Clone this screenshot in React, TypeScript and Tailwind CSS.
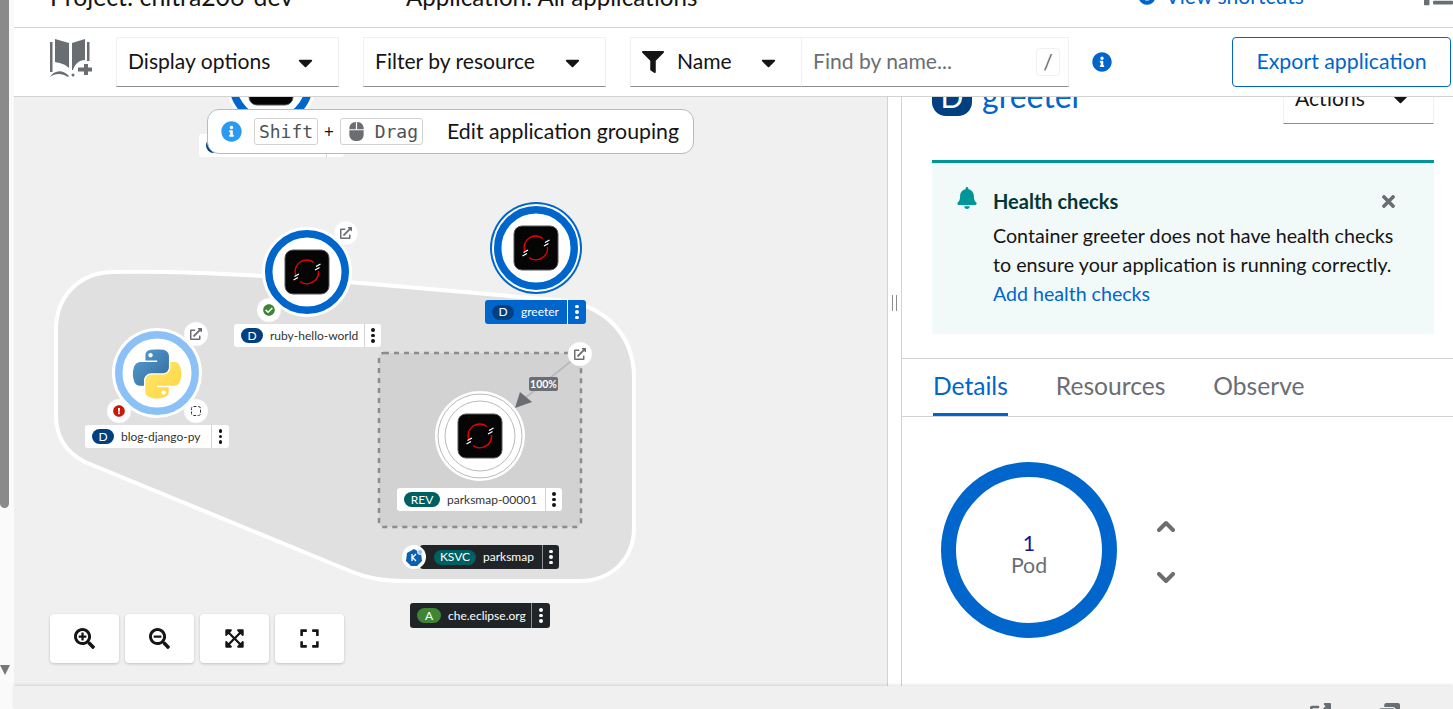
import type { ReactNode } from "react";
import {
  FaBell,
  FaCaretDown,
  FaCheckCircle,
  FaExclamationCircle,
  FaExpand,
  FaExpandArrowsAlt,
  FaExternalLinkAlt,
  FaFilter,
  FaInfoCircle,
  FaList,
  FaMouse,
  FaSearchMinus,
  FaSearchPlus,
  FaTimes,
  FaWindowRestore,
} from "react-icons/fa";

function OpenshiftIcon({ cx, cy }: { cx: number; cy: number }) {
  return (
    <g transform={`translate(${cx} ${cy})`}>
      <rect x="-22" y="-22" width="44" height="44" rx="8" fill="#050505" stroke="#55585c" strokeWidth="1" />
      <path d="M-11.500 3A11.700 11.700 0 0 1 7 -9.500" fill="none" stroke="#e00" strokeWidth="1.400" />
      <path d="M11.500 -1A11.700 11.700 0 0 1 -7 9.500" fill="none" stroke="#e00" strokeWidth="1.400" />
      <path d="M8 -2L12.500 -4.500M9 -5.500L13.500 -8M-12.500 4.500L-8 2M-13.500 8L-9 5.500" stroke="#fff" strokeWidth="1.400" />
    </g>
  );
}

function Decorator({ cx, cy }: { cx: number; cy: number }) {
  return <circle cx={cx} cy={cy} r="12" fill="#fff" stroke="#ececec" strokeWidth="0.5" />;
}

function LinkDecorator({ cx, cy }: { cx: number; cy: number }) {
  return (
    <g>
      <Decorator cx={cx} cy={cy} />
      <FaExternalLinkAlt x={cx - 6} y={cy - 6} size={12} color="#6a6e73" />
    </g>
  );
}

function NodeRing({ cx, cy, color }: { cx: number; cy: number; color: string }) {
  return (
    <g>
      <circle cx={cx} cy={cy} r="45" fill="#fff" />
      <circle cx={cx} cy={cy} r="38.250" fill="#fff" stroke={color} strokeWidth="7.500" />
    </g>
  );
}

function Topology() {
  return (
    <svg viewBox="14 97 873 589" className="absolute left-0 top-0 w-[873px] h-[589px]">
      <defs>
        <linearGradient id="pyBlue" x1="0" y1="0" x2="1" y2="1">
          <stop offset="0" stopColor="#5a9fd4" />
          <stop offset="1" stopColor="#306998" />
        </linearGradient>
        <linearGradient id="pyYellow" x1="0" y1="0" x2="1" y2="1">
          <stop offset="0" stopColor="#ffe873" />
          <stop offset="1" stopColor="#ffd43b" />
        </linearGradient>
      </defs>

      <path
        d="M112 272C200 270 300 278 360 283L555 300C605 303 634 335 634 378L634 527C634 560 611 581 579 581L405 581C385 581 370 579 350 571L85 462C65 452 56 435 56 415L56 330C56 295 80 273 112 272Z"
        fill="#e0e0e0"
        stroke="#fff"
        strokeWidth="4"
      />

      <NodeRing cx={271} cy={83} color="#0066cc" />
      <OpenshiftIcon cx={271} cy={83} />

      <NodeRing cx={307} cy={272} color="#0066cc" />
      <OpenshiftIcon cx={307} cy={272} />
      <LinkDecorator cx={346} cy={233} />
      <Decorator cx={269} cy={310} />
      <FaCheckCircle x={263} y={304} size={12} color="#3e8635" />

      <NodeRing cx={157} cy={373} color="#8bc1f7" />
      <g transform="translate(133 349) scale(0.435)">
        <path
          fill="url(#pyBlue)"
          d="M54.9 0.9C50.3 0.9 46 1.3 42.1 2 30.7 4 28.6 8.2 28.6 16v10.3h27v3.4H18.5c-7.8 0-14.7 4.7-16.9 13.7-2.5 10.3-2.6 16.7 0 27.4 1.9 8 6.5 13.7 14.3 13.7h9.3V72.2c0-8.9 7.7-16.7 16.9-16.7h27c7.5 0 13.5-6.2 13.5-13.7V16c0-7.3-6.2-12.8-13.5-14-4.7-.8-9.5-1.1-14.2-1.1zM40.3 9.2c2.8 0 5.1 2.3 5.1 5.1 0 2.8-2.3 5.1-5.1 5.1-2.8 0-5.1-2.3-5.1-5.1 0-2.8 2.3-5.1 5.1-5.1z"
        />
        <path
          fill="url(#pyYellow)"
          d="M85.6 29.7v12c0 9.3-7.9 17.1-16.9 17.1h-27c-7.4 0-13.5 6.3-13.5 13.7v25.7c0 7.3 6.4 11.6 13.5 13.7 8.5 2.5 16.7 3 27 0 6.8-2 13.5-5.9 13.5-13.7V88H55.2v-3.4h40.5c7.8 0 10.8-5.5 13.5-13.7 2.8-8.5 2.7-16.6 0-27.4-1.9-7.8-5.6-13.7-13.5-13.7H85.6zM70.4 94.8c2.8 0 5.1 2.3 5.1 5.1 0 2.8-2.3 5.1-5.1 5.1-2.8 0-5.1-2.3-5.1-5.1 0-2.8 2.3-5.1 5.1-5.1z"
        />
      </g>
      <LinkDecorator cx={196} cy={334} />
      <Decorator cx={119} cy={411} />
      <FaExclamationCircle x={113} y={405} size={12} color="#c9190b" />
      <Decorator cx={196} cy={411} />
      <rect x="191.5" y="406.5" width="9" height="9" rx="2" fill="none" stroke="#333" strokeWidth="1" strokeDasharray="3 1.5" />

      <circle cx="536" cy="248" r="46" fill="#0066cc" />
      <circle cx="536" cy="248" r="44" fill="#fff" />
      <circle cx="536" cy="248" r="38.250" fill="#fff" stroke="#0066cc" strokeWidth="7.500" />
      <OpenshiftIcon cx={536} cy={248} />

      <rect x="379" y="353" width="202" height="174" rx="5" fill="#d2d2d2" stroke="#8a8d90" strokeWidth="2.5" strokeDasharray="5 5" />
      <circle cx="480" cy="436" r="45" fill="#fff" />
      <circle cx="480" cy="436" r="42" fill="none" stroke="#b8bbbe" strokeWidth="1" />
      <circle cx="480" cy="436" r="35" fill="none" stroke="#b8bbbe" strokeWidth="1" />
      <OpenshiftIcon cx={480} cy={436} />
      <line x1="580" y1="354" x2="525" y2="398" stroke="#b8bbbe" strokeWidth="2" />
      <path d="M515 408L520 392L532 402Z" fill="#6a6e73" />
      <LinkDecorator cx={580} cy={354} />
    </svg>
  );
}

const pill = "flex items-center justify-center rounded-full text-white h-[15px] text-[12px] leading-none";

function NodeLabel({
  className,
  badge,
  badgeClass,
  name,
  nameClass,
  dividerClass,
  dotClass,
  menuClass,
}: {
  className: string;
  badge: string;
  badgeClass: string;
  name: string;
  nameClass: string;
  dividerClass: string;
  dotClass: string;
  menuClass: string;
}) {
  return (
    <div className={`absolute flex items-center rounded-[3px] text-[12px] leading-[18px] ${className}`}>
      <span className={`${pill} ${badgeClass}`}>{badge}</span>
      <span className={`flex-1 pl-[7px] whitespace-nowrap ${nameClass}`}>{name}</span>
      <span className={`flex h-full flex-col items-center justify-center gap-[2px] border-l ${menuClass} ${dividerClass}`}>
        <i className={`block h-[3.5px] w-[3.5px] rounded-full ${dotClass}`} />
        <i className={`block h-[3.5px] w-[3.5px] rounded-full ${dotClass}`} />
        <i className={`block h-[3.5px] w-[3.5px] rounded-full ${dotClass}`} />
      </span>
    </div>
  );
}

function ZoomButton({ children }: { children: ReactNode }) {
  return (
    <button className="flex h-[49px] w-[69px] items-center justify-center rounded-[4px] bg-white text-[#151515] shadow-[0_1px_3px_rgba(0,0,0,0.2)]">
      {children}
    </button>
  );
}

function Dropdown({ label, className }: { label: string; className: string }) {
  return (
    <div className={`flex h-[50px] items-center justify-between border border-[#f0f0f0] border-b-[#8a8d90] pl-[11px] pr-[21px] text-[#151515] ${className}`}>
      <span className="pb-[2px]">{label}</span>
      <FaCaretDown size={23} />
    </div>
  );
}

export default function App() {
  return (
    <div className="flex h-[709px] w-[1453px] overflow-hidden bg-white font-['Lato',sans-serif] text-[21.1px] leading-[32px] text-[#151515]">
      {/* browser scrollbar */}
      <div className="relative w-[14px] shrink-0 bg-[#fafafa]">
        <div className="h-[508px] w-[9px] rounded-b-[5px] bg-[#8a8a8a]" />
        <div className="absolute left-0 top-[665px] h-0 w-0 border-x-[5px] border-t-[10px] border-x-transparent border-t-[#777]" />
      </div>

      <div className="flex min-w-0 flex-1 flex-col">
        {/* project bar, mostly scrolled away */}
        <div className="flex h-[28px] shrink-0 items-start overflow-hidden border-b border-[#d2d2d2] pl-[36px]">
          <div className="-mt-[22px] w-[356px] shrink-0 text-[24.8px] leading-[37px]">Project: chitra206-dev</div>
          <div className="-mt-[22px] text-[24.1px] leading-[37px]">Application: All applications</div>
          <div className="-mt-[20px] ml-auto flex items-center gap-[10px] pr-[149px] text-[#0066cc]">
            <FaInfoCircle size={18} />
            <span>View shortcuts</span>
          </div>
          <FaList className="absolute left-[1424px] -top-[21px] text-[#6a6e73]" size={29} />
        </div>

        {/* toolbar */}
        <div className="flex h-[69px] shrink-0 items-center border-b border-[#d2d2d2] pl-[36px]">
          <svg viewBox="50 38 42 40" className="mb-[8px] h-[40px] w-[42px] shrink-0" fill="#6a6e73">
            <path d="M50 42H52.500V72H50Z" />
            <path d="M55 39L69 43V68C65 64 60 63 55 62Z" />
            <path d="M72 43L85 39V60C78 60 74 66 73 70H72Z" />
            <path d="M87 42H89.500V61H87Z" />
            <path d="M50 77C54 70 63 69 69 76L68 77C62 73 55 73 50 77Z" />
            <circle cx="73" cy="75" r="1.500" />
            <path d="M84 64H88V67.500H92V71.500H88V75H84V71.500H78V67.500H84Z" />
          </svg>
          <Dropdown label="Display options" className="ml-[24px] w-[223px]" />
          <Dropdown label="Filter by resource" className="ml-[24px] w-[243px]" />
          <div className="ml-[24px] flex h-[50px] w-[172px] items-center border border-[#f0f0f0] border-b-[#8a8d90] pl-[11px] pr-[21px]">
            <FaFilter size={22} />
            <span className="ml-[13px] flex-1 pb-[2px]">Name</span>
            <FaCaretDown size={23} />
          </div>
          <div className="flex h-[50px] w-[267px] items-center justify-between border border-l-0 border-[#f0f0f0] border-b-[#8a8d90] pl-[11px] pr-[8px] text-[#6a6e73]">
            <span className="pb-[2px]">Find by name...</span>
            <span className="flex h-[28px] w-[24px] items-center justify-center rounded-[4px] border border-[#f0f0f0]">/</span>
          </div>
          <FaInfoCircle className="ml-[23px] text-[#0066cc]" size={20} />
          <button className="ml-auto mr-[2px] h-[50px] w-[219px] rounded-[4px] border border-[#0066cc] pb-[2px] text-[21.3px] text-[#0066cc]">
            Export application
          </button>
        </div>

        {/* canvas and details */}
        <div className="flex min-h-0 flex-1">
          <div className="relative w-[874px] shrink-0 overflow-hidden border-r border-[#d2d2d2] bg-[#f0f0f0]">
            <Topology />
            <NodeLabel
              className="left-[185px] top-[37px] h-[23px] w-[145px] bg-white pl-[7px]"
              badge="D"
              badgeClass="w-[22px] bg-[#004080]"
              name=""
              nameClass=""
              dividerClass="border-[#d2d2d2]"
              dotClass="bg-[#151515]"
              menuClass="w-[18px]"
            />
            <NodeLabel
              className="left-[220px] top-[227px] h-[23px] w-[147px] bg-white pl-[7px]"
              badge="D"
              badgeClass="w-[22px] bg-[#004080]"
              name="ruby-hello-world"
              nameClass="text-[#333]"
              dividerClass="border-[#d2d2d2]"
              dotClass="bg-[#151515]"
              menuClass="w-[17px]"
            />
            <NodeLabel
              className="left-[71px] top-[328px] h-[23px] w-[144px] bg-white pl-[7px]"
              badge="D"
              badgeClass="w-[22px] bg-[#004080]"
              name="blog-django-py"
              nameClass="text-[#333]"
              dividerClass="border-[#d2d2d2]"
              dotClass="bg-[#151515]"
              menuClass="w-[18px]"
            />
            <NodeLabel
              className="left-[471px] top-[203px] h-[24px] w-[101px] bg-[#0066cc] pl-[7px]"
              badge="D"
              badgeClass="w-[22px] bg-[#004080]"
              name="greeter"
              nameClass="text-white"
              dividerClass="border-white"
              dotClass="bg-white"
              menuClass="w-[19px]"
            />
            <NodeLabel
              className="left-[383px] top-[391px] h-[23px] w-[165px] bg-white pl-[7px]"
              badge="REV"
              badgeClass="w-[36px] bg-[#005f60]"
              name="parksmap-00001"
              nameClass="text-[#333]"
              dividerClass="border-[#d2d2d2]"
              dotClass="bg-[#151515]"
              menuClass="w-[17px]"
            />
            <NodeLabel
              className="left-[406px] top-[448px] h-[24px] w-[139px] bg-[#212427] pl-[14px]"
              badge="KSVC"
              badgeClass="w-[42px] bg-[#005f60]"
              name="parksmap"
              nameClass="text-white"
              dividerClass="border-[#8a8d90]"
              dotClass="bg-white"
              menuClass="w-[17px]"
            />
            <NodeLabel
              className="left-[396px] top-[506px] h-[25px] w-[140px] bg-[#212427] pl-[7px]"
              badge="A"
              badgeClass="w-[24px] bg-[#3e8635]"
              name="che.eclipse.org"
              nameClass="text-white"
              dividerClass="border-[#8a8d90]"
              dotClass="bg-white"
              menuClass="w-[19px]"
            />

            {/* traffic weight on the revision edge */}
            <div className="absolute left-[515px] top-[280px] flex h-[14px] w-[29px] items-center justify-center rounded-[2px] bg-[#6a6e73] text-[10.5px] font-bold leading-none text-white">
              100%
            </div>

            {/* knative decorator sits on top of the service label */}
            <svg viewBox="0 0 24 24" className="absolute left-[388px] top-[448px] h-[24px] w-[24px]">
              <circle cx="12" cy="12" r="12" fill="#fff" />
              <path d="M12 4L19 8L20 16L15 21H9L4 16L5 8Z" fill="#0a5fb0" />
              <circle cx="18" cy="7" r="2.500" fill="#8bc1f7" stroke="#fff" strokeWidth="0.8" />
              <path d="M10 9V16M14 9L10.500 12.500L14 16" fill="none" stroke="#fff" strokeWidth="1.300" />
            </svg>

            {/* shortcut hint */}
            <div className="absolute left-[193px] top-[12px] flex h-[45px] w-[487px] items-center rounded-[12px] border border-[#b8bbbe] bg-white pl-[13px]">
              <FaInfoCircle className="text-[#2b9af3]" size={21} />
              <kbd className="ml-[12px] flex h-[27px] w-[64px] items-center justify-center rounded-[3px] border border-[#d2d2d2] font-['DejaVu_Sans_Mono',monospace] text-[18px] text-[#4f5255]">
                Shift
              </kbd>
              <span className="w-[22px] text-center text-[17px]">+</span>
              <kbd className="flex h-[27px] w-[83px] items-center justify-between rounded-[3px] border border-[#d2d2d2] pl-[6px] pr-[4px] font-['DejaVu_Sans_Mono',monospace] text-[18px] text-[#4f5255]">
                <FaMouse size={19} className="text-[#6a6e73]" />
                Drag
              </kbd>
              <span className="ml-[24px] pb-[1px] text-[21.3px]">Edit application grouping</span>
            </div>

            {/* zoom controls */}
            <div className="absolute left-[36px] top-[517px] flex gap-[6px]">
              <ZoomButton><FaSearchPlus size={21} /></ZoomButton>
              <ZoomButton><FaSearchMinus size={21} /></ZoomButton>
              <ZoomButton><FaExpandArrowsAlt size={21} /></ZoomButton>
              <ZoomButton><FaExpand size={21} /></ZoomButton>
            </div>
          </div>

          {/* resize handle */}
          <div className="flex w-[13px] shrink-0 items-center justify-center">
            <div className="-mt-[178px] h-[16px] w-[5px] border-x border-[#8a8d90]" />
          </div>

          {/* side panel */}
          <div className="flex min-w-0 flex-1 flex-col border-l border-[#d2d2d2]">
            <div className="flex h-[63px] shrink-0 items-start justify-between overflow-hidden pl-[30px] pr-[19px]">
              <div className="-mt-[25px] flex items-center gap-[10px]">
                <span className="flex h-[40px] w-[40px] items-center justify-center rounded-[14px] bg-[#004080] text-[30px] text-white">D</span>
                <span className="text-[32px] leading-[48px] text-[#0066cc]">greeter</span>
              </div>
              <div className="-mt-[24px] flex h-[51px] w-[151px] items-center justify-between border border-[#f0f0f0] border-b-[#8a8d90] pl-[11px] pr-[21px]">
                <span className="pb-[2px]">Actions</span>
                <FaCaretDown size={23} />
              </div>
            </div>

            <div className="ml-[30px] mr-[19px] flex h-[174px] shrink-0 border-t-[3px] border-[#009596] bg-[#f2f9f9] pl-[24px] pr-[37px] pt-[23px]">
              <FaBell className="mt-[1px] shrink-0 text-[#009596]" size={22} />
              <div className="ml-[15px] min-w-0 flex-1">
                <div className="flex items-center justify-between">
                  <span className="text-[20px] font-bold leading-[30px] text-[#003737]">Health checks</span>
                  <FaTimes className="-mr-[1px] text-[#6a6e73]" size={19} />
                </div>
                <p className="mt-[5px] text-[19.7px] leading-[29px]">
                  Container greeter does not have health checks to ensure your application is running correctly.
                </p>
                <a className="block text-[19.6px] leading-[29px] text-[#0066cc]">Add health checks</a>
              </div>
            </div>

            <div className="mt-[24px] flex h-[59px] shrink-0 gap-[48px] border-y border-[#d2d2d2] pl-[31px] text-[24.6px] text-[#6a6e73]">
              <span className="flex items-center border-b-[3px] border-[#0066cc] text-[#0066cc]">Details</span>
              <span className="flex items-center pb-[3px]">Resources</span>
              <span className="flex items-center pb-[3px]">Observe</span>
            </div>

            <div className="flex items-center pl-[39px] pt-[45px]">
              <div className="flex h-[176px] w-[176px] flex-col items-center justify-center rounded-full border-[15px] border-[#0066cc] pt-[8px] text-[21.3px] leading-[22px]">
                <span className="text-[#151596]">1</span>
                <span className="text-[#6a6e73]">Pod</span>
              </div>
              <div className="ml-[40px] mt-[4px] flex flex-col gap-[40px]">
                <svg viewBox="0 0 18 12" className="h-[12px] w-[18px]">
                  <path d="M2 10L9 3L16 10" fill="none" stroke="#6a6e73" strokeWidth="4" strokeLinecap="round" strokeLinejoin="round" />
                </svg>
                <svg viewBox="0 0 18 12" className="h-[12px] w-[18px]">
                  <path d="M2 2L9 9L16 2" fill="none" stroke="#6a6e73" strokeWidth="4" strokeLinecap="round" strokeLinejoin="round" />
                </svg>
              </div>
            </div>
          </div>
        </div>

        {/* bottom bar */}
        <div className="relative flex h-[23px] shrink-0 justify-end bg-[#f0f0f0] shadow-[0_-1px_3px_rgba(0,0,0,0.12)]">
          <div className="mr-[53px] mt-[17px] flex gap-[48px] text-[#6a6e73]">
            <FaExternalLinkAlt size={21} />
            <FaWindowRestore size={21} />
          </div>
        </div>
      </div>
    </div>
  );
}
